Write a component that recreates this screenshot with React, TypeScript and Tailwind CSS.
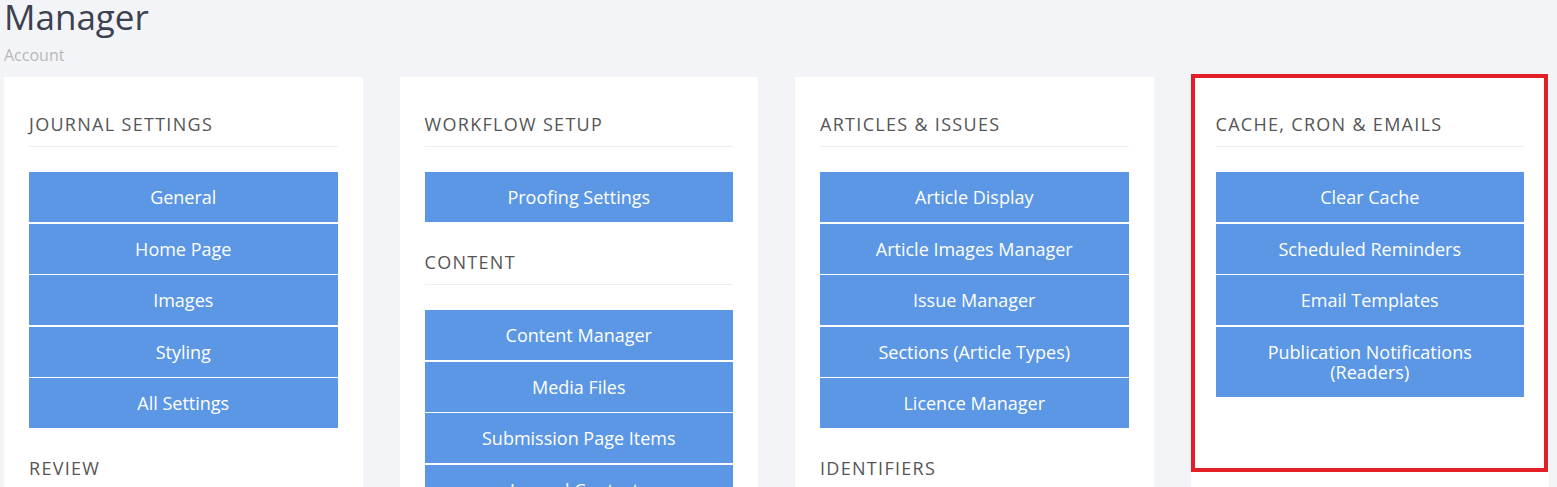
import React from "react";

type Section = { title: string; items: string[] };

const columns: Section[][] = [
  [
    { title: "Journal Settings", items: ["General", "Home Page", "Images", "Styling", "All Settings"] },
    { title: "Review", items: ["Review Settings", "Reviewer Database"] },
  ],
  [
    { title: "Workflow Setup", items: ["Proofing Settings"] },
    { title: "Content", items: ["Content Manager", "Media Files", "Submission Page Items", "Journal Contacts", "Editorial Team"] },
  ],
  [
    { title: "Articles & Issues", items: ["Article Display", "Article Images Manager", "Issue Manager", "Sections (Article Types)", "Licence Manager"] },
    { title: "Identifiers", items: ["DOI Manager"] },
  ],
  [
    { title: "Cache, Cron & Emails", items: ["Clear Cache", "Scheduled Reminders", "Email Templates", "Publication Notifications (Readers)"] },
  ],
];

function Block({ s, first }: { s: Section; first: boolean }) {
  return (
    <div className={first ? "" : "mt-[28px]"}>
      <div className="border-b border-[#eeeeee] pb-[10px] text-[18px] font-medium leading-[24px] uppercase tracking-[1.3px] text-[#555555]">
        {s.title}
      </div>
      <div className="mt-[25px] flex flex-col gap-[1.5px]">
        {s.items.map((it) => (
          <div
            key={it}
            className="bg-[#5b97e5] px-[40px] py-[15px] text-center text-[18px] leading-[20px] text-white"
          >
            {it}
          </div>
        ))}
      </div>
    </div>
  );
}

export default function App() {
  return (
    <div
      className="h-[487px] overflow-hidden bg-[#f3f4f8]"
      style={{ fontFamily: '"Open Sans", "Noto Sans", sans-serif' }}
    >
      <div className="pl-[4px] pr-[8px]">
        <h1 className="-mt-[7px] text-[35px] leading-[48px] text-[#3c4150]">Manager</h1>
        <div className="mt-[3px] text-[16px] leading-[22px] text-[#b8b8b8]">Account</div>
        <div className="mt-[11px] grid grid-cols-4 gap-[37px]">
          {columns.map((col, i) => (
            <div key={i} className="relative h-[600px] bg-white px-[25px] pt-[35px]">
              {col.map((s, j) => (
                <Block key={s.title} s={s} first={j === 0} />
              ))}
              {i === 3 && (
                <div className="pointer-events-none absolute left-0 top-[-3px] h-[398px] w-[357px] border-[4px] border-[#e41e26]" />
              )}
            </div>
          ))}
        </div>
      </div>
    </div>
  );
}
